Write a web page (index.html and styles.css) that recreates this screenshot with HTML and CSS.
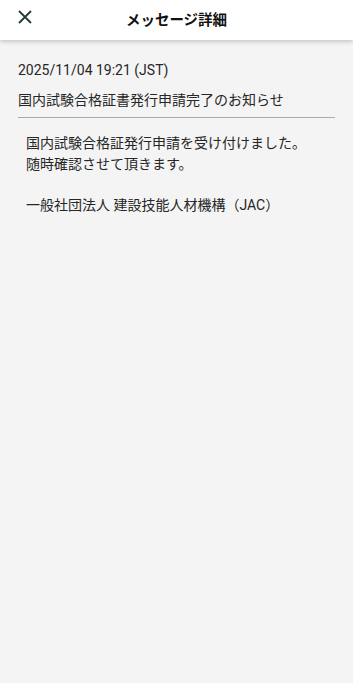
FILE: index.html
```html
<!DOCTYPE html>
<html lang="ja">
<head>
    <meta charset="UTF-8">
    <meta name="viewport" content="width=device-width, initial-scale=1.0">
    <title>メッセージ詳細</title>
    <link rel="stylesheet" href="styles.css">
</head>
<body>

    <header class="top-bar">
        <div class="close-button">
            <svg width="14" height="14" viewBox="0 0 14 14">
                <path d="M1 1 L13 13 M13 1 L1 13" stroke="#1f3b38" stroke-width="1.8" fill="none"/>
            </svg>
        </div>
        <h1>メッセージ詳細</h1>
    </header>

    <main class="message">
        <div class="message-date">2025/11/04 19:21 (JST)</div>
        <div class="message-subject">国内試験合格証書発行申請完了のお知らせ</div>
        <div class="message-body">
            <p>国内試験合格証発行申請を受け付けました。<br>随時確認させて頂きます。</p>
            <p>一般社団法人 建設技能人材機構（JAC）</p>
        </div>
    </main>

</body>
</html>
```

FILE: styles.css
```css
body {
    font-family: Roboto, "Noto Sans CJK JP", sans-serif;
    margin: 0;
    padding: 0;
    background-color: #f4f4f4;
    color: #262626;
    min-height: 683px;
}

.top-bar {
    position: relative;
    height: 40px;
    background: white;
    display: flex;
    align-items: center;
    justify-content: center;
    box-shadow: 0 2px 4px rgba(0, 0, 0, 0.18);
}

.close-button {
    position: absolute;
    left: 18px;
    top: 10px;
    width: 14px;
    height: 14px;
}

.close-button svg {
    display: block;
}

.top-bar h1 {
    margin: 0;
    font-size: 14.5px;
    font-weight: bold;
    color: #111;
    margin-top: -3px;
}

.message {
    padding: 20px 18px 0 18px;
}

.message-date {
    font-size: 14px;
    line-height: 20px;
}

.message-subject {
    font-size: 14px;
    line-height: 20px;
    margin-top: 10px;
    padding-bottom: 7px;
    border-bottom: 1px solid #aaa;
}

.message-body {
    padding: 15px 8px 0 8px;
    font-size: 14px;
    line-height: 20.5px;
}

.message-body p {
    margin: 0 0 20.5px 0;
}
```
